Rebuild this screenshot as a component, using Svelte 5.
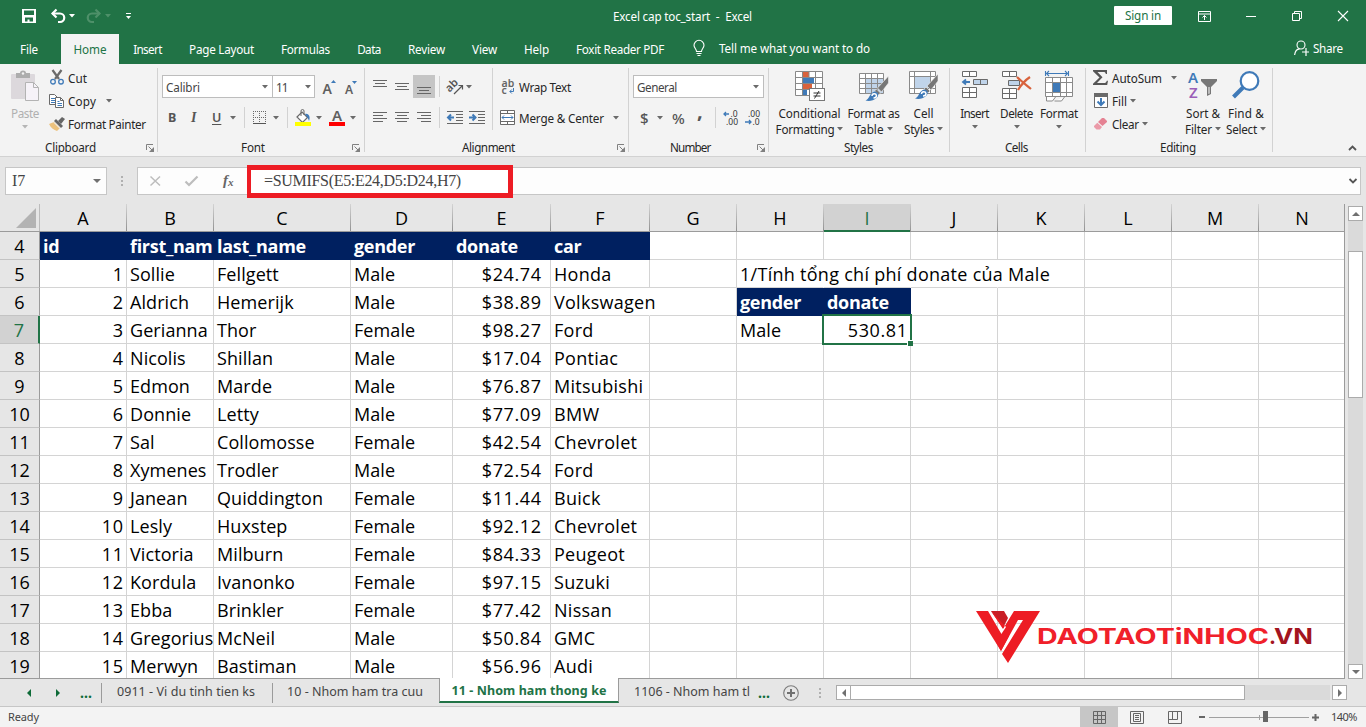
<script>
  // Tracks a label's letter spacing so that it fills its slot.
  function fit(node, width) {
    if (!width) return;
    node.style.letterSpacing = '0px';
    const range = document.createRange();
    range.selectNodeContents(node);
    const natural = range.getBoundingClientRect().width;
    const n = node.textContent.length;
    if (n > 1) node.style.letterSpacing = ((width - natural) / (n - 0.5)).toFixed(3) + 'px';
  }

  const G = '#6a6a6a';
  const B = '#3f7ab8';
  const lines = (list, c = '#666') =>
    list.map(([x1, x2, y]) => `<rect x="${x1}" y="${y}" width="${x2 - x1}" height="1" fill="${c}"/>`).join('');
  const brush = `<path d="M30 4v7l-7 9-4-4z" fill="#777" stroke="#f3f3f3" stroke-width=".6"/><path d="M18 17l4 4-2 2-4-4z" fill="#777" stroke="#f3f3f3" stroke-width=".6"/><path d="M7 28.500c4-1 4-8 9-9 4 0 5 4 2 6.500-3 3-8 3.500-11 2.500z" fill="${B}"/><path d="M13.500 24c0-3 4-3 4.500-.5 0 1.500-1.500 2.500-3 2.500" stroke="#fff" stroke-width="1.400" fill="none"/>`;

  const icons = {
    save: [14, 14, `<path fill-rule="evenodd" fill="#fff" d="M0 0h14v14H0zM2 1.5v4.5h10V1.500zM3 8.500v4h2.500v-2h2v2h3.500v-4z"/>`],
    undo: [15, 15, `<path d="M1 4.500h8a4.200 4.200 0 0 1 0 8.500H7" stroke="#fff" stroke-width="2.200" fill="none"/><path d="M5.500 .5L1.500 4.500l4 4" stroke="#fff" stroke-width="2.200" fill="none"/>`],
    redo: [15, 15, `<path d="M14 4.500H6a4.200 4.200 0 0 0 0 8.500h2" stroke="#4e9069" stroke-width="2.200" fill="none"/><path d="M9.500 .5l4 4-4 4" stroke="#4e9069" stroke-width="2.200" fill="none"/>`],
    qat: [6, 7, `<rect x="0" y="0" width="5" height="1" fill="#fff"/><path d="M0 3h5L2.500 6z" fill="#fff"/>`],
    arrW: [6, 4, `<path d="M0 0h6L3 3.500z" fill="#fff"/>`],
    arrF: [6, 4, `<path d="M0 0h6L3 3.500z" fill="#4e9069"/>`],
    arr: [6, 4, `<path d="M0 0h6L3 3.500z" fill="${G}"/>`],
    arrL: [6, 4, `<path d="M0 0h6L3 3.500z" fill="#b5b5b5"/>`],
    ribbonOpt: [13, 11, `<path d="M.5 .5h12v10H.5zM.5 3h12M6.500 9V4.500M4.500 6.500l2-2 2 2" stroke="#fff" fill="none"/>`],
    min: [10, 1, `<rect width="10" height="1" fill="#fff"/>`],
    restore: [10, 10, `<path d="M.5 2.500h7v7h-7zM2.500 2V.5h7v7H8" stroke="#fff" fill="none"/>`],
    close: [10, 10, `<path d="M0 0l10 10M10 0L0 10" stroke="#fff" stroke-width="1.100" fill="none"/>`],
    bulb: [12, 17, `<path d="M3.500 11.500C3.500 9 1 8 1 5.300a5 5 0 0 1 10 0C11 8 8.500 9 8.500 11.500zM3.500 13.500h5M4.500 15.500h3" stroke="#fff" stroke-width="1.100" fill="none"/>`],
    share: [15, 16, `<circle cx="7" cy="5" r="4" stroke="#fff" stroke-width="1.100" fill="none"/><path d="M.6 15c.5-4 2.500-6 5-6.200M12 8v8M8 12h7" stroke="#fff" stroke-width="1.200" fill="none"/>`],
    paste: [29, 31, `<rect x="0" y="3" width="24" height="25" rx="1" fill="#dcd8dc"/><path d="M5 2h4a3 2.500 0 0 1 6 0h4v5H5z" fill="#adadad"/><circle cx="12" cy="2.500" r="1.200" fill="#f3f3f3"/><path d="M14.500 11.500h8l5 5v13h-13z" fill="#f6f2f8" stroke="#b3b3b3"/><path d="M22.500 11.500v5h5" fill="none" stroke="#b3b3b3"/>`],
    cut: [14, 15, `<path d="M2.500 0l6.500 9M11.500 0L5 9" stroke="#6a6a6a" stroke-width="2.200" fill="none"/><circle cx="3" cy="11.700" r="2.300" stroke="${B}" stroke-width="1.300" fill="none"/><circle cx="11" cy="11.700" r="2.300" stroke="${B}" stroke-width="1.300" fill="none"/>`],
    copy: [15, 14, `<path d="M.5 .5h5l3 3v7h-8z" fill="#fff" stroke="${G}"/><path d="M2 4.500h4M2 6.500h4M2 8.500h4" stroke="${B}"/><path d="M6.500 3.500h5l3 3v7h-8z" fill="#fff" stroke="${G}"/><path d="M11.500 3.500v3h3" fill="none" stroke="${G}"/><path d="M8.500 7.500h2M8.500 9.500h4.500M8.500 11.500h4.500" stroke="${B}"/>`],
    painter: [16, 14, `<path d="M0 7l5-2 6 6-3 3C5 13 2 11 0 7z" fill="#ecc27e"/><path d="M5 4l2-2 7 7-2 2z" fill="#666"/><path d="M9 4l4-4 3 2-4 5z" fill="#666"/><path d="M5 5.500l6 6" stroke="#f3f3f3"/>`],
    launch: [8, 8, `<path d="M.5 6V.5H7M2.500 2.500l4 4" stroke="#808080" fill="none"/><path d="M8 3v5H3z" fill="#808080"/>`],
    bigA: [12, 14, `<text x="-.5" y="14" font-size="14" font-weight="600" fill="#5f5f5f">A</text><path d="M8 3h5l-2.500-3z" fill="${B}"/>`],
    smallA: [12, 14, `<text x="0" y="14" font-size="12" font-weight="600" fill="#5f5f5f">A</text><path d="M7 1h5L9.500 4z" fill="${B}"/>`],
    border: [13, 14, `<path d="M.5 0v12M6.500 0v12M12.500 0v12M0 .5h13M0 6.500h13" stroke="${G}" stroke-dasharray="1 1" fill="none"/><rect y="12" width="13" height="1" fill="#555"/>`],
    fill: [16, 17, `<path d="M2 8l5-5 5.500 5.500-5 5z" fill="#fff" stroke="${G}" stroke-width="1.200"/><path d="M6 7V2a1.500 1.500 0 0 1 3 0v4" stroke="${G}" fill="none"/><path d="M10 5c3-1 6 2 4 7-1-3-2-4-4-7z" fill="${B}"/><rect y="13" width="16" height="4" fill="#ff0"/>`],
    fontA: [16, 17, `<text x="3" y="12" font-size="15" font-weight="600" fill="#5f5f5f">A</text><rect y="13" width="16" height="4" fill="#f00"/>`],
    alT: [14, 9, lines([[0, 14, 0], [2, 12, 3], [0, 14, 6]])],
    alM: [14, 9, lines([[0, 14, 1], [2, 12, 4], [0, 14, 7]])],
    alB: [22, 23, `<rect width="22" height="23" fill="#c5c5c5"/>` + lines([[4, 18, 12], [6, 16, 15], [4, 18, 18]])],
    alL: [14, 11, lines([[0, 14, 0], [0, 10, 3], [0, 14, 6], [0, 10, 9]])],
    alC: [14, 11, lines([[0, 14, 0], [2, 12, 3], [0, 14, 6], [2, 12, 9]])],
    alR: [14, 11, lines([[0, 14, 0], [4, 14, 3], [0, 14, 6], [4, 14, 9]])],
    orient: [17, 16, `<g transform="rotate(-45 6 8)"><text x="-.5" y="9.500" font-size="11" font-weight="600" fill="#555">ab</text></g><path d="M7 15l8-8M11.500 6.500h4v4" stroke="#555" stroke-width="1.200" fill="none"/>`],
    dec: [16, 14, lines([[0, 16, 0], [9, 16, 3], [9, 16, 6], [9, 16, 9], [0, 16, 12]]) + `<path d="M7 6.500H2M4 3.500l-3 3 3 3" stroke="${B}" stroke-width="2" fill="none"/>`],
    inc: [16, 14, lines([[0, 16, 0], [9, 16, 3], [9, 16, 6], [9, 16, 9], [0, 16, 12]]) + `<path d="M0 6.500h5M3.500 3.500l3 3-3 3" stroke="${B}" stroke-width="2" fill="none"/>`],
    wrap: [13, 16, `<text x="-.5" y="8" font-size="10.500" font-weight="600" fill="#666">ab</text><text x="-.5" y="15" font-size="10.500" font-weight="600" fill="#666">c</text><path d="M11.500 9v3.500H8M9.800 10.500l-2 2 2 2" stroke="${B}" fill="none"/>`],
    merge: [15, 15, `<path d="M.5 .5h14v14H.5zM.5 3.500h14M.5 11.500h14M7.500 .5v3M7.500 11.500v3" stroke="${G}" fill="#fff"/><path d="M2 7.500h11M4 5.500l-2 2 2 2M11 5.500l2 2-2 2" stroke="${B}" fill="none"/>`],
    decUp: [15, 14, `<path d="M6 3H1M3 1L1 3l2 2" stroke="${B}" stroke-width="1.300" fill="none"/><text x="7.500" y="6" font-size="8.500" fill="#333">.0</text><text x="3" y="14" font-size="8.500" fill="#333">.00</text>`],
    decDn: [15, 14, `<path d="M0 11h5.500M4 9l2 2-2 2" stroke="${B}" stroke-width="1.300" fill="none"/><text x="3" y="6" font-size="8.500" fill="#333">.00</text><text x="7.500" y="14" font-size="8.500" fill="#333">.0</text>`],
    cond: [30, 30, `<path d="M.5 .5h27v24H.5z" fill="#fff"/><rect x="8" y="1" width="6" height="5" fill="#d8623c"/><rect x="8" y="7" width="11" height="5" fill="${B}"/><rect x="8" y="13" width="9" height="5" fill="#d8623c"/><rect x="8" y="19" width="4" height="5" fill="${B}"/><path d="M.5 .5h27v24H.5zM7.500 .5v24M14 .5v6M20.500 .5v24M.5 6.500h27M.5 12.500h27M.5 18.500h27" stroke="#888" fill="none"/><rect x="14.500" y="17.500" width="15" height="12" fill="#fff" stroke="#777"/><path d="M18.500 22h7M18.500 25h7M24 20l-4.500 7.500" stroke="#333" fill="none"/>`],
    fmtTable: [30, 30, `<path d="M.5 2.500h24v20H.5z" fill="#fff"/><path d="M7 8h17v14H7z" fill="#c0d4ea"/><path d="M.5 2.500h24v20H.5zM6.500 2.500v20M12.500 2.500v20M18.500 2.500v20M.5 7.500h24M.5 12.500h24M.5 17.500h24" stroke="#8a8a8a" fill="none"/><g transform="translate(-.5 1)">${brush}</g>`],
    cellStyles: [30, 30, `<path d="M.5 .5h26v22H.5z" fill="#fff"/><path d="M6 6h15v11H6z" fill="#c0d4ea"/><path d="M.5 .5h26v22H.5zM5.500 .5v22M21.500 .5v22M.5 5.500h26M.5 17.500h26" stroke="#8a8a8a" fill="none"/><g transform="translate(-1 -1)">${brush}</g>`],
    insert: [28, 28, `<path d="M1.500 .5h14v5h-14zM8.500 .5v5M1.500 16.500h14v10h-14zM8.500 16.500v10M1.500 21.500h14" stroke="${G}" fill="#fff"/><path d="M12.500 8.500h14v5h-14zM19.500 8.500v5" stroke="${G}" fill="#c0d4ea"/><path d="M9 11H2.500M5 8.500l-3 2.500 3 2.500" stroke="${B}" stroke-width="1.800" fill="none"/>`],
    del: [30, 28, `<path d="M.5 .5h14v5H.5zM7.500 .5v5M.5 17.500h14v10H.5zM7.500 17.500v10M.5 22.500h14" stroke="${G}" fill="#fff"/><path d="M6.500 9.500h11v5h-11z" stroke="${G}" fill="#c0d4ea"/><path d="M15 6c4 4 8 7 14 12M28 6c-6 4-9 8-12 13" stroke="#d8623c" stroke-width="2.200" fill="none"/>`],
    format: [28, 31, `<path d="M1 2.500h22M4 0L1.500 2.500 4 5M20 0l2.500 2.500L20 5M.5 0v5M23.500 0v5" stroke="${B}" stroke-width="1.100" fill="none"/><path d="M.5 6.500h27v19H.5z" fill="#fff"/><rect x="8" y="12" width="7" height="9" fill="${B}"/><path d="M.5 6.500h27v19H.5zM7.500 6.500v19M15.500 6.500v19M21.500 6.500v19M.5 11.500h27M.5 21.500h27" stroke="#8a8a8a" fill="none"/><path d="M1.500 26v4h6l3-4M9.500 30h7l3-4" stroke="#8a8a8a" fill="#fff"/>`],
    sum: [15, 15, `<path d="M0 0h14v4h-1.200c-.3-1.500-.8-2-2.500-2H4.500l5 5.200L4 13h7c1.600 0 2.300-.7 2.800-2.300H15L14.200 15H0v-1.200L6.500 7.500 0 1.200z" fill="#555"/>`],
    fillDn: [14, 15, `<path d="M.5 .5h13v14H.5z" fill="#fff" stroke="${G}"/><rect width="14" height="4" fill="${G}"/><path d="M7 5v7M3.500 8.500L7 12l3.500-3.500" stroke="${B}" stroke-width="2" fill="none"/>`],
    clear: [13, 12, `<path d="M8 0h2l3 3v1L8.500 8 4 4z" fill="#e58293"/><path d="M3.300 4.700L8 9l-2 2.500H2.500L0 9V8z" fill="#eb9aa8"/>`],
    sort: [30, 28, `<text x="0" y="12" font-size="15" font-weight="600" fill="${B}">A</text><text x="1" y="27" font-size="15" font-weight="600" fill="#9a5fb8">Z</text><path d="M13 8h16v2l-6 6v7l-4 2v-9l-6-6z" fill="#777"/><path d="M20.500 16v7l1-.5V16z" fill="#fff"/>`],
    find: [28, 28, `<circle cx="17.500" cy="10" r="8.800" fill="#fff" stroke="${B}" stroke-width="2.200"/><path d="M11 16.500L1.500 26" stroke="${B}" stroke-width="4" fill="none"/>`],
    up: [9, 6, `<path d="M1 5l3.500-3.500L8 5" stroke="#555" stroke-width="1.800" fill="none"/>`],
    down: [8, 6, `<path d="M.5 1L4 4.500 7.500 1" stroke="#555" stroke-width="1.800" fill="none"/>`],
    dots: [2, 10, `<path d="M0 0h2v2H0zM0 4h2v2H0zM0 8h2v2H0z" fill="#b0b0b0"/>`],
    x: [11, 10, `<path d="M.5 .5l9.500 9M10 .5l-9.500 9" stroke="#bdbdbd" stroke-width="1.500" fill="none"/>`],
    check: [13, 10, `<path d="M.5 5.500l3.500 3.500L12.500 .5" stroke="#bdbdbd" stroke-width="2.200" fill="none"/>`],
    fx: [14, 16, `<text x="1" y="12" font-family="Liberation Serif, serif" font-style="italic" font-weight="700" font-size="15" fill="#666">f</text><text x="6" y="12.500" font-family="Liberation Serif, serif" font-style="italic" font-weight="700" font-size="11" fill="#666">x</text>`],
    navL: [4, 8, `<path d="M4 0v8L0 4z" fill="#0e6b38"/>`],
    navR: [4, 8, `<path d="M0 0v8l4-4z" fill="#0e6b38"/>`],
    plus: [16, 16, `<circle cx="8" cy="8" r="7.300" stroke="#7c7c7c" stroke-width="1.100" fill="none"/><path d="M8 4v8M4 8h8" stroke="#707070" stroke-width="2" fill="none"/>`],
    tUp: [8, 4, `<path d="M4 0l4 4H0z" fill="#707070"/>`],
    tDn: [8, 4, `<path d="M0 0h8L4 4z" fill="#707070"/>`],
    tL: [4, 8, `<path d="M4 0v8L0 4z" fill="#707070"/>`],
    tR: [4, 8, `<path d="M0 0v8l4-4z" fill="#707070"/>`],
    vNormal: [13, 13, `<path d="M.5 .5h12v12H.5zM4.500 .5v12M8.500 .5v12M.5 4.500h12M.5 8.500h12" stroke="#666" fill="none"/>`],
    vPage: [14, 13, `<path d="M.5 .5h13v12H.5zM3.500 2.500h7v8h-7zM5 4.500h4M5 6.500h4M5 8.500h4" stroke="#666" fill="none"/>`],
    vBreak: [14, 13, `<path d="M.5 .5h13v12H.5zM4.500 .5v8M9.500 .5v8M.5 8.500h9" stroke="#666" fill="none"/>`],
    slider: [100, 12, `<rect y="6" width="100" height="1" fill="#a0a0a0"/><rect x="50" y="4" width="1" height="5" fill="#a0a0a0"/><rect x="54" y="0" width="5" height="11" fill="#666"/>`],
    zMinus: [6, 2, `<rect width="6" height="2" fill="#666"/>`],
    zPlus: [7, 7, `<path d="M3.500 0v7M0 3.500h7" stroke="#666" stroke-width="2"/>`],
  };

  // Row entries: g = gap before, w = text width, t = text, i = icon, c = class
  const tabs = [
    { g: 20, w: 18, t: 'File' }, { g: 23, w: 58, t: 'Home', active: true, tw: 33 }, { g: 14, w: 29, t: 'Insert' },
    { g: 27, w: 65, t: 'Page Layout' }, { g: 27, w: 49, t: 'Formulas' }, { g: 27, w: 24, t: 'Data' },
    { g: 27, w: 37, t: 'Review' }, { g: 27, w: 25, t: 'View' }, { g: 27, w: 25, t: 'Help' },
    { g: 27, w: 88, t: 'Foxit Reader PDF' },
  ];

  const cols = [['A', 87], ['B', 87], ['C', 137], ['D', 102], ['E', 98], ['F', 99], ['G', 87], ['H', 87], ['I', 87], ['J', 87], ['K', 87], ['L', 87], ['M', 87], ['N', 86]];
  const people = [
    ['1', 'Sollie', 'Fellgett', 'Male', '$24.74', 'Honda'],
    ['2', 'Aldrich', 'Hemerijk', 'Male', '$38.89', 'Volkswagen'],
    ['3', 'Gerianna', 'Thor', 'Female', '$98.27', 'Ford'],
    ['4', 'Nicolis', 'Shillan', 'Male', '$17.04', 'Pontiac'],
    ['5', 'Edmon', 'Marde', 'Male', '$76.87', 'Mitsubishi'],
    ['6', 'Donnie', 'Letty', 'Male', '$77.09', 'BMW'],
    ['7', 'Sal', 'Collomosse', 'Female', '$42.54', 'Chevrolet'],
    ['8', 'Xymenes', 'Trodler', 'Male', '$72.54', 'Ford'],
    ['9', 'Janean', 'Quiddington', 'Female', '$11.44', 'Buick'],
    ['10', 'Lesly', 'Huxstep', 'Female', '$92.12', 'Chevrolet'],
    ['11', 'Victoria', 'Milburn', 'Female', '$84.33', 'Peugeot'],
    ['12', 'Kordula', 'Ivanonko', 'Female', '$97.15', 'Suzuki'],
    ['13', 'Ebba', 'Brinkler', 'Female', '$77.42', 'Nissan'],
    ['14', 'Gregorius', 'McNeil', 'Male', '$50.84', 'GMC'],
    ['15', 'Merwyn', 'Bastiman', 'Male', '$56.96', 'Audi'],
  ];
  const extra = { '5H': '1/Tính tổng chí phí donate của Male', '6H': 'gender', '6I': 'donate', '7H': 'Male', '7I': '530.81' };
  const head = ['id', 'first_nam', 'last_name', 'gender', 'donate', 'car'];
  const rows = [...Array(16).keys()].map((k) => {
    const r = k + 4;
    return {
      r,
      cells: cols.map(([c], j) => ({
        t: j < 6 ? (k === 0 ? head[j] : people[k - 1][j]) : extra[r + c] ?? '',
        navy: (k === 0 && j < 6) || (r === 6 && (c === 'H' || c === 'I')),
        num: k > 0 && (j === 0 || j === 4 || (r === 7 && c === 'I')),
        cur: j === 4,
        wide: j === 5 || (r === 5 && c === 'H'),
        open: (r === 5 && 'HIJ'.includes(c)) || (r === 6 && c === 'F'),
        sel: r === 7 && c === 'I',
      })),
    };
  });
</script>

{#snippet icon(name)}
  <svg class="ico" width={icons[name][0]} height={icons[name][1]} viewBox="0 0 {icons[name][0]} {icons[name][1]}">{@html icons[name][2]}</svg>
{/snippet}

{#snippet row(items)}
  {#each items as it}
    {#if it.t}
      <span class="txt {it.c ?? ''}" style:margin-left="{it.g ?? 0}px" style:width="{it.w}px" use:fit={it.w}>{it.t}</span>
    {:else if it.sep}
      <span class="vsep" style:margin-left="{it.g}px"></span>
    {:else}
      <span class="pic {it.c ?? ''}" style:margin-left="{it.g ?? 0}px">{@render icon(it.i)}</span>
    {/if}
  {/each}
{/snippet}

{#snippet foot(pad, w, text, gap)}
  <div class="foot" style:padding-left="{pad}px">
    <span class="txt" style:width="{w}px" use:fit={w}>{text}</span>
    {#if gap}<span class="pic" style:margin-left="{gap}px">{@render icon('launch')}</span>{/if}
  </div>
{/snippet}

<div class="app">
  <header class="title">
    {@render row([{ g: 22, i: 'save' }, { g: 15, i: 'undo' }, { g: 3, i: 'arrW' }, { g: 11, i: 'redo' }, { g: 4, i: 'arrF' }, { g: 15, i: 'qat' }, { g: 481, w: 139, t: 'Excel cap toc_start  -  Excel', c: 'pre' }])}
    <button class="signin"><span class="txt" use:fit={36}>Sign in</span></button>
    {@render row([{ g: 26, i: 'ribbonOpt' }, { g: 35, i: 'min' }, { g: 36, i: 'restore' }, { g: 36, i: 'close' }])}
  </header>

  <nav class="tabs">
    {#each tabs as t}
      <span class="tab" class:active={t.active} style:margin-left="{t.g}px" style:width="{t.w}px"><span class="txt" use:fit={t.tw ?? t.w}>{t.t}</span></span>
    {/each}
    {@render row([{ g: 29, i: 'bulb' }, { g: 14, w: 151, t: 'Tell me what you want to do' }, { g: 424, i: 'share' }, { g: 4, w: 30, t: 'Share' }])}
  </nav>

  <section class="ribbon">
    <div class="group" style:width="158px">
      <div class="body">
        <div class="big paste" style:width="50px">
          {@render icon('paste')}
          <span class="txt dim l1" use:fit={28}>Paste</span>
          <span class="l2 solo">{@render icon('arrL')}</span>
        </div>
        <div class="stack">
          <div class="line">{@render row([{ i: 'cut' }, { g: 4, w: 19, t: 'Cut' }])}</div>
          <div class="line">{@render row([{ i: 'copy', c: 'lead' }, { g: 4, w: 28, t: 'Copy' }, { g: 10, i: 'arr' }])}</div>
          <div class="line">{@render row([{ i: 'painter', c: 'lead' }, { g: 3, w: 78, t: 'Format Painter' }])}</div>
        </div>
      </div>
      {@render foot(45, 51, 'Clipboard', 50)}
    </div>

    <div class="group" style:width="207px">
      <div class="body col">
        <div class="tool">
          <div class="combo" style:width="111px"><span class="txt" use:fit={34}>Calibri</span>{@render icon('arr')}</div>
          <div class="combo second" style:width="43px"><span class="txt" use:fit={12}>11</span>{@render icon('arr')}</div>
          {@render row([{ g: 8, i: 'bigA' }, { g: 10, i: 'smallA' }])}
        </div>
        <div class="tool low">
          {@render row([{ g: 10, w: 8, t: 'B', c: 'fmt b' }, { g: 15, w: 6, t: 'I', c: 'fmt it' }, { g: 15, w: 9, t: 'U', c: 'fmt u' }, { g: 9, i: 'arr' }, { g: 8, sep: 1 }, { g: 8, i: 'border' }, { g: 7, i: 'arr' }, { g: 8, sep: 1 }, { g: 7, i: 'fill' }, { g: 5, i: 'arr' }, { g: 7, i: 'fontA' }, { g: 5, i: 'arr' }])}
        </div>
      </div>
      {@render foot(83, 24, 'Font', 87)}
    </div>

    <div class="group" style:width="264px">
      <div class="body">
        <div class="half">
          <div class="tool">{@render row([{ g: 8, i: 'alT', c: 'hi' }, { g: 8, i: 'alM' }, { g: 4, i: 'alB' }, { g: 4, sep: 1 }, { g: 7, i: 'orient' }, { g: 2, i: 'arr' }])}</div>
          <div class="tool low">{@render row([{ g: 8, i: 'alL' }, { g: 8, i: 'alC' }, { g: 8, i: 'alR' }, { g: 8, sep: 1 }, { g: 7, i: 'dec' }, { g: 6, i: 'inc' }])}</div>
        </div>
        <div class="half second">
          <div class="tool">{@render row([{ g: 9, i: 'wrap' }, { g: 4, w: 52, t: 'Wrap Text' }])}</div>
          <div class="tool low">{@render row([{ g: 7, i: 'merge' }, { g: 4, w: 85, t: 'Merge & Center' }, { g: 9, i: 'arr' }])}</div>
        </div>
      </div>
      {@render foot(97, 53, 'Alignment', 102)}
    </div>

    <div class="group" style:width="140px">
      <div class="body col">
        <div class="tool"><div class="combo" style:width="131px"><span class="txt" use:fit={40}>General</span>{@render icon('arr')}</div></div>
        <div class="tool low">
          {@render row([{ g: 11, w: 8, t: '$', c: 'sym' }, { g: 9, i: 'arr' }, { g: 9, w: 13, t: '%', c: 'sym' }, { g: 12, w: 4, t: ',', c: 'sym comma' }, { g: 14, sep: 1 }, { g: 7, i: 'decUp' }, { g: 7, i: 'decDn' }])}
        </div>
      </div>
      {@render foot(41, 41, 'Number', 46)}
    </div>

    <div class="group" style:width="181px">
      <div class="body styles">
        <div class="big" style:width="79px">
          {@render icon('cond')}
          <span class="txt l1" use:fit={62}>Conditional</span>
          <span class="l2"><span class="txt" use:fit={59}>Formatting</span>{@render icon('arr')}</span>
        </div>
        <div class="big" style:width="49px">
          {@render icon('fmtTable')}
          <span class="txt l1" use:fit={52}>Format as</span>
          <span class="l2"><span class="txt" use:fit={29}>Table</span>{@render icon('arr')}</span>
        </div>
        <div class="big" style:width="51px">
          {@render icon('cellStyles')}
          <span class="txt l1" use:fit={20}>Cell</span>
          <span class="l2"><span class="txt" use:fit={30}>Styles</span>{@render icon('arr')}</span>
        </div>
      </div>
      {@render foot(75, 29, 'Styles', 0)}
    </div>

    <div class="group" style:width="136px">
      <div class="body cells">
        <div class="big" style:width="43px">{@render icon('insert')}<span class="txt l1" use:fit={29}>Insert</span><span class="l2 solo">{@render icon('arr')}</span></div>
        <div class="big" style:width="41px">{@render icon('del')}<span class="txt l1" use:fit={33}>Delete</span><span class="l2 solo">{@render icon('arr')}</span></div>
        <div class="big" style:width="44px">{@render icon('format')}<span class="txt l1" use:fit={38}>Format</span><span class="l2 solo">{@render icon('arr')}</span></div>
      </div>
      {@render foot(55, 23, 'Cells', 0)}
    </div>

    <div class="group" style:width="187px">
      <div class="body">
        <div class="stack edit">
          <div class="line">{@render row([{ g: 7, i: 'sum' }, { g: 4, w: 50, t: 'AutoSum' }, { g: 9, i: 'arr' }])}</div>
          <div class="line">{@render row([{ g: 8, i: 'fillDn' }, { g: 4, w: 15, t: 'Fill' }, { g: 3, i: 'arr' }])}</div>
          <div class="line">{@render row([{ g: 8, i: 'clear' }, { g: 5, w: 27, t: 'Clear' }, { g: 3, i: 'arr' }])}</div>
        </div>
        <div class="big" style:width="44px">
          {@render icon('sort')}
          <span class="txt l1" use:fit={34}>Sort &amp;</span>
          <span class="l2"><span class="txt" use:fit={27}>Filter</span>{@render icon('arr')}</span>
        </div>
        <div class="big" style:width="42px">
          {@render icon('find')}
          <span class="txt l1" use:fit={36}>Find &amp;</span>
          <span class="l2"><span class="txt" use:fit={31}>Select</span>{@render icon('arr')}</span>
        </div>
      </div>
      {@render foot(74, 36, 'Editing', 0)}
    </div>
    <div class="collapse">{@render icon('up')}</div>
  </section>

  <section class="fbar">
    <div class="namebox"><span class="serif">I7</span>{@render icon('tDn')}</div>
    <div class="grip">{@render icon('dots')}</div>
    <div class="fbox">
      {@render row([{ g: 12, i: 'x' }, { g: 24, i: 'check' }, { g: 24, i: 'fx' }])}
      <div class="formula"><span class="serif" use:fit={197}>=SUMIFS(E5:E24,D5:D24,H7)</span></div>
      <span class="expand">{@render icon('down')}</span>
    </div>
  </section>

  <main class="work">
    <div class="sheet">
      <div class="hrow">
        <div class="corner"><svg width="20" height="20"><path d="M20 0v20H0z" fill="#b3b3b3" /></svg></div>
        {#each cols as [c, w]}
          <div class="ch" class:on={c === 'I'} style:width="{w}px">{c}</div>
        {/each}
      </div>
      {#each rows as { r, cells }}
        <div class="grow">
          <div class="rh" class:on={r === 7}>{r}</div>
          {#each cells as cell, j}
            <div class="cell" class:navy={cell.navy} class:num={cell.num} class:cur={cell.cur} class:wide={cell.wide} class:open={cell.open} class:sel={cell.sel} style:width="{cols[j][1]}px">{cell.t}</div>
          {/each}
        </div>
      {/each}
    </div>
    <div class="vscroll">
      <div class="sbtn">{@render icon('tUp')}</div>
      <div class="vtrack"><div class="vthumb"></div></div>
      <div class="sbtn">{@render icon('tDn')}</div>
    </div>
    <svg class="brand" width="340" height="56" viewBox="0 0 340 56">
      <path d="M0 0h12l14 24 3-4 4 5-8 15z" fill="#ed1c24" />
      <path d="M15 0h13l4 7-5 10z" fill="#c81e25" />
      <path d="M15 0l12 18 11-18h26L32 52l-6-9 21-34h-5L25 40l-5-9 10-15z" fill="#ed1c24" />
      <text x="61" y="32.500" textLength="232" lengthAdjust="spacingAndGlyphs" fill="#f0202a">DAOTAOTiNHOC</text>
      <text x="293" y="32.500" fill="#a31420">.</text>
      <text x="298" y="32.500" textLength="39" lengthAdjust="spacingAndGlyphs" fill="#a31420">VN</text>
    </svg>
  </main>

  <footer class="sheets">
    {@render row([{ g: 27, i: 'navL' }, { g: 25, i: 'navR' }, { g: 20, w: 12, t: '...', c: 'dots' }])}
    <div class="st first" style:width="171px"><span class="txt" use:fit={138}>0911 - Vi du tinh tien ks</span></div>
    <div class="st" style:width="167px"><span class="txt" use:fit={136}>10 - Nhom ham tra cuu</span></div>
    <div class="st current" style:width="180px"><span class="txt" use:fit={155}>11 - Nhom ham thong ke</span></div>
    <div class="st last" style:width="131px"><span class="txt" use:fit={116}>1106 - Nhom ham tl</span></div>
    {@render row([{ g: 8, w: 12, t: '...', c: 'dots' }, { g: 13, i: 'plus' }, { g: 20, i: 'dots' }])}
    <div class="hscroll">
      <div class="sbtn">{@render icon('tL')}</div>
      <div class="htrack"><div class="hthumb"></div></div>
      <div class="sbtn">{@render icon('tR')}</div>
    </div>
  </footer>

  <footer class="status">
    <span class="txt ready" use:fit={31}>Ready</span>
    <span class="view">{@render icon('vNormal')}</span>
    {@render row([{ g: 12, i: 'vPage' }, { g: 24, i: 'vBreak' }, { g: 17, i: 'zMinus' }, { g: 4, i: 'slider' }, { g: 3, i: 'zPlus' }, { g: 12, w: 26, t: '140%' }])}
  </footer>
</div>

<style>
  :global(body) { background: #e6e6e6; overflow: hidden; }
  .app { width: 1366px; height: 727px; display: flex; flex-direction: column; overflow: hidden; font: 11.7px/16px "Noto Sans", "Open Sans", sans-serif; color: #262626; background: #e6e6e6; }
  .ico { display: block; flex: none; overflow: visible; font-family: "Noto Sans", sans-serif; }
  .txt { display: block; white-space: nowrap; flex: none; }
  .pre { white-space: pre; }
  .pic { display: flex; flex: none; }
  .title { height: 32px; flex: none; display: flex; align-items: center; background: #217346; color: #fff; }
  .title .txt { margin-top: -1px; }
  .signin { margin: -1px 0 0 362px; padding: 0; width: 58px; height: 19px; flex: none; border: 0; border-radius: 1px; background: #fff; color: #217346; font: inherit; display: flex; align-items: center; justify-content: center; }
  .tabs { height: 32px; flex: none; display: flex; align-items: center; background: #217346; color: #fff; }
  .tab { height: 30px; margin-top: 2px; padding-bottom: 1px; box-sizing: border-box; flex: none; display: flex; align-items: center; justify-content: center; }
  .tab.active { background: #f3f3f3; color: #217346; }
  .ribbon { height: 92px; flex: none; display: flex; background: #f3f3f3; border-bottom: 1px solid #d2d2d2; }
  .group { flex: none; height: 84px; margin-top: 4px; border-right: 1px solid #d2d2d2; box-sizing: border-box; display: flex; flex-direction: column; }
  .body { height: 71px; flex: none; display: flex; align-items: flex-start; }
  .body.col { flex-direction: column; }
  .styles { padding-left: 1px; }
  .cells { padding-left: 3px; }
  .foot { height: 16px; display: flex; align-items: center; flex: none; }
  .foot .pic { margin-top: 2px; }
  .big { display: flex; flex-direction: column; align-items: center; flex: none; height: 69px; padding-top: 3px; box-sizing: border-box; }
  .big .ico { margin-bottom: auto; }
  .big .l1 { height: 16px; }
  .l2 { height: 16px; display: flex; align-items: center; gap: 3px; }
  .l2 .ico { margin: 0; }
  .l2.solo { padding-bottom: 4px; height: 12px; }
  .dim { color: #b0b0b0; }
  .stack { display: flex; flex-direction: column; margin-top: -2px; }
  .lead { margin-left: -1px !important; }
  .line { height: 23px; display: flex; align-items: center; }
  .edit { width: 95px; }
  .tool { height: 23px; margin-top: 7px; display: flex; align-items: center; }
  .tool.low { margin-top: 8px; }
  .half { width: 127px; height: 62px; flex: none; }
  .half.second { border-left: 1px solid #d2d2d2; }
  .combo { height: 23px; box-sizing: border-box; flex: none; margin-left: 4px; padding: 0 4px 0 3px; border: 1px solid #bdbdbd; background: #fff; display: flex; align-items: center; justify-content: space-between; color: #444; }
  .combo.second { margin-left: -1px; padding-right: 3px; }
  .vsep { width: 1px; height: 21px; flex: none; background: #d2d2d2; }
  .hi { margin-bottom: 4px; }
  .fmt { color: #555; font-weight: 700; font-size: 12.5px; }
  .it { font-family: "Liberation Serif", serif; font-style: italic; font-size: 14px; }
  .u { font-weight: 600; text-decoration: underline; text-underline-offset: 2px; }
  .sym { color: #555; font-size: 15px; font-weight: 500; }
  .comma { font-weight: 700; font-size: 20px; margin-top: -14px; }
  .collapse { margin: 81px 0 0 75px; }
  .fbar { height: 47px; flex: none; display: flex; align-items: flex-start; box-sizing: border-box; padding: 10px 0 0 5px; }
  .namebox { width: 102px; height: 28px; box-sizing: border-box; flex: none; padding: 0 5px 0 6px; border: 1px solid #c6c6c6; background: #fdfdfd; display: flex; align-items: center; justify-content: space-between; }
  .serif { font: 16px/20px "Liberation Serif", serif; color: #444; white-space: nowrap; }
  .grip { width: 29px; height: 28px; display: flex; align-items: center; justify-content: center; }
  .fbox { width: 1224px; height: 28px; box-sizing: border-box; margin-left: 1px; border: 1px solid #c6c6c6; background: #fdfdfd; display: flex; align-items: center; }
  .formula { width: 266px; height: 33px; flex: none; box-sizing: border-box; margin-left: 11px; padding-left: 13px; border: 4px solid #ed1c24; border-width: 5px 5px 5px 4px; background: #fff; display: flex; align-items: center; z-index: 1; }
  .expand { margin-left: auto; margin-right: 3px; }
  .work { position: relative; height: 475px; flex: none; display: flex; }
  .sheet { width: 1345px; height: 475px; box-sizing: border-box; flex: none; overflow: hidden; border-right: 1px solid #9b9b9b; border-bottom: 1px solid #9b9b9b; background: #fff; font: 18px/28px "Open Sans", sans-serif; color: #000; }
  .hrow { height: 28px; display: flex; background: #e6e6e6; border-bottom: 1px solid #9b9b9b; box-sizing: border-box; width: 1345px; }
  .corner { width: 40px; height: 27px; flex: none; box-sizing: border-box; padding: 4px 0 0 16px; border-right: 1px solid #bcbcbc; }
  .corner svg { display: block; }
  .ch { height: 27px; line-height: 29px; flex: none; box-sizing: border-box; text-align: center; border-right: 1px solid #a6a6a6; border-image: linear-gradient(#d6d6d6, #8f8f8f) 1; }
  .ch:last-child { border-right: 0; }
  .ch.on { height: 28px; background: #d2d2d2; color: #217346; box-shadow: inset 0 -2px #217346; z-index: 1; }
  .grow { height: 28px; display: flex; width: 1345px; }
  .rh { width: 40px; height: 28px; line-height: 28px; flex: none; box-sizing: border-box; text-align: center; background: #e6e6e6; border-right: 1px solid #9b9b9b; border-bottom: 1px solid #c3c3c3; }
  .rh.on { background: #d2d2d2; color: #217346; border-right: 2px solid #217346; }
  .cell { height: 28px; line-height: 28px; flex: none; box-sizing: border-box; padding: 0 3px; letter-spacing: .08px; border-right: 1px solid #d4d4d4; border-bottom: 1px solid #d4d4d4; white-space: nowrap; }
  .cell.wide { letter-spacing: .28px; }
  .cell.navy { background: #002060; border-color: #002060; color: #fff; font-weight: 700; overflow: hidden; letter-spacing: -.3px; }
  .cell.num { text-align: right; letter-spacing: .6px; padding-right: 2.4px; }
  .cell.cur.num { padding-right: 8.4px; }
  .cell.open { border-right-color: transparent; }
  .cell.sel { position: relative; }
  .cell.sel::before { content: ""; position: absolute; inset: -2px -2px -2px -2px; border: 2px solid #217346; }
  .cell.sel::after { content: ""; position: absolute; right: -3px; bottom: -3px; width: 5px; height: 5px; background: #217346; border: 1px solid #fff; border-width: 1px 0 0 1px; }
  .vscroll { width: 15px; height: 473px; margin: 2px 0 0 3px; display: flex; flex-direction: column; }
  .sbtn { width: 15px; height: 15px; box-sizing: border-box; flex: none; border: 1px solid #ababab; background: #fff; display: flex; align-items: center; justify-content: center; }
  .vtrack { flex: 1; background: #dadada; padding-top: 30px; }
  .vthumb { height: 147px; box-sizing: border-box; border: 1px solid #ababab; background: #fff; }
  .brand { position: absolute; left: 976px; top: 407px; font: 700 21px "Inter", sans-serif; }
  .sheets { height: 28px; flex: none; box-sizing: border-box; display: flex; align-items: center; border-bottom: 1px solid #c6c6c6; color: #444; font-size: 12.500px; }
  .dots { color: #0e6b38; font-weight: 700; font-size: 14px; }
  .st { height: 20px; flex: none; box-sizing: border-box; padding: 0 2px 2px 0; border-left: 1px solid #9b9b9b; display: flex; align-items: center; justify-content: center; }
  .st.first { margin-left: 9px; }
  .st.current { height: 25px; align-self: flex-start; margin-top: -1px; padding: 3px 0 0; background: #fff; border-bottom: 2px solid #217346; border-right: 1px solid #9b9b9b; color: #217346; font-weight: 700; z-index: 1; }
  .st.last { border: 0; padding-right: 0; justify-content: flex-end; }
  .hscroll { margin-left: 15px; width: 511px; display: flex; }
  .htrack { flex: 1; background: #dadada; margin-right: 2px; display: flex; }
  .hthumb { width: 395px; height: 15px; margin-left: -1px; box-sizing: border-box; border: 1px solid #ababab; background: #fff; }
  .status { height: 20px; flex: none; display: flex; align-items: center; background: #f3f3f3; color: #444; font-size: 11px; }
  .ready { margin-left: 8px; width: 31px; }
  .view { width: 38px; height: 20px; margin-left: 1041px; background: #c6c6c6; display: flex; align-items: center; justify-content: center; flex: none; }
  .status .txt { margin-top: -1px; }
</style>
